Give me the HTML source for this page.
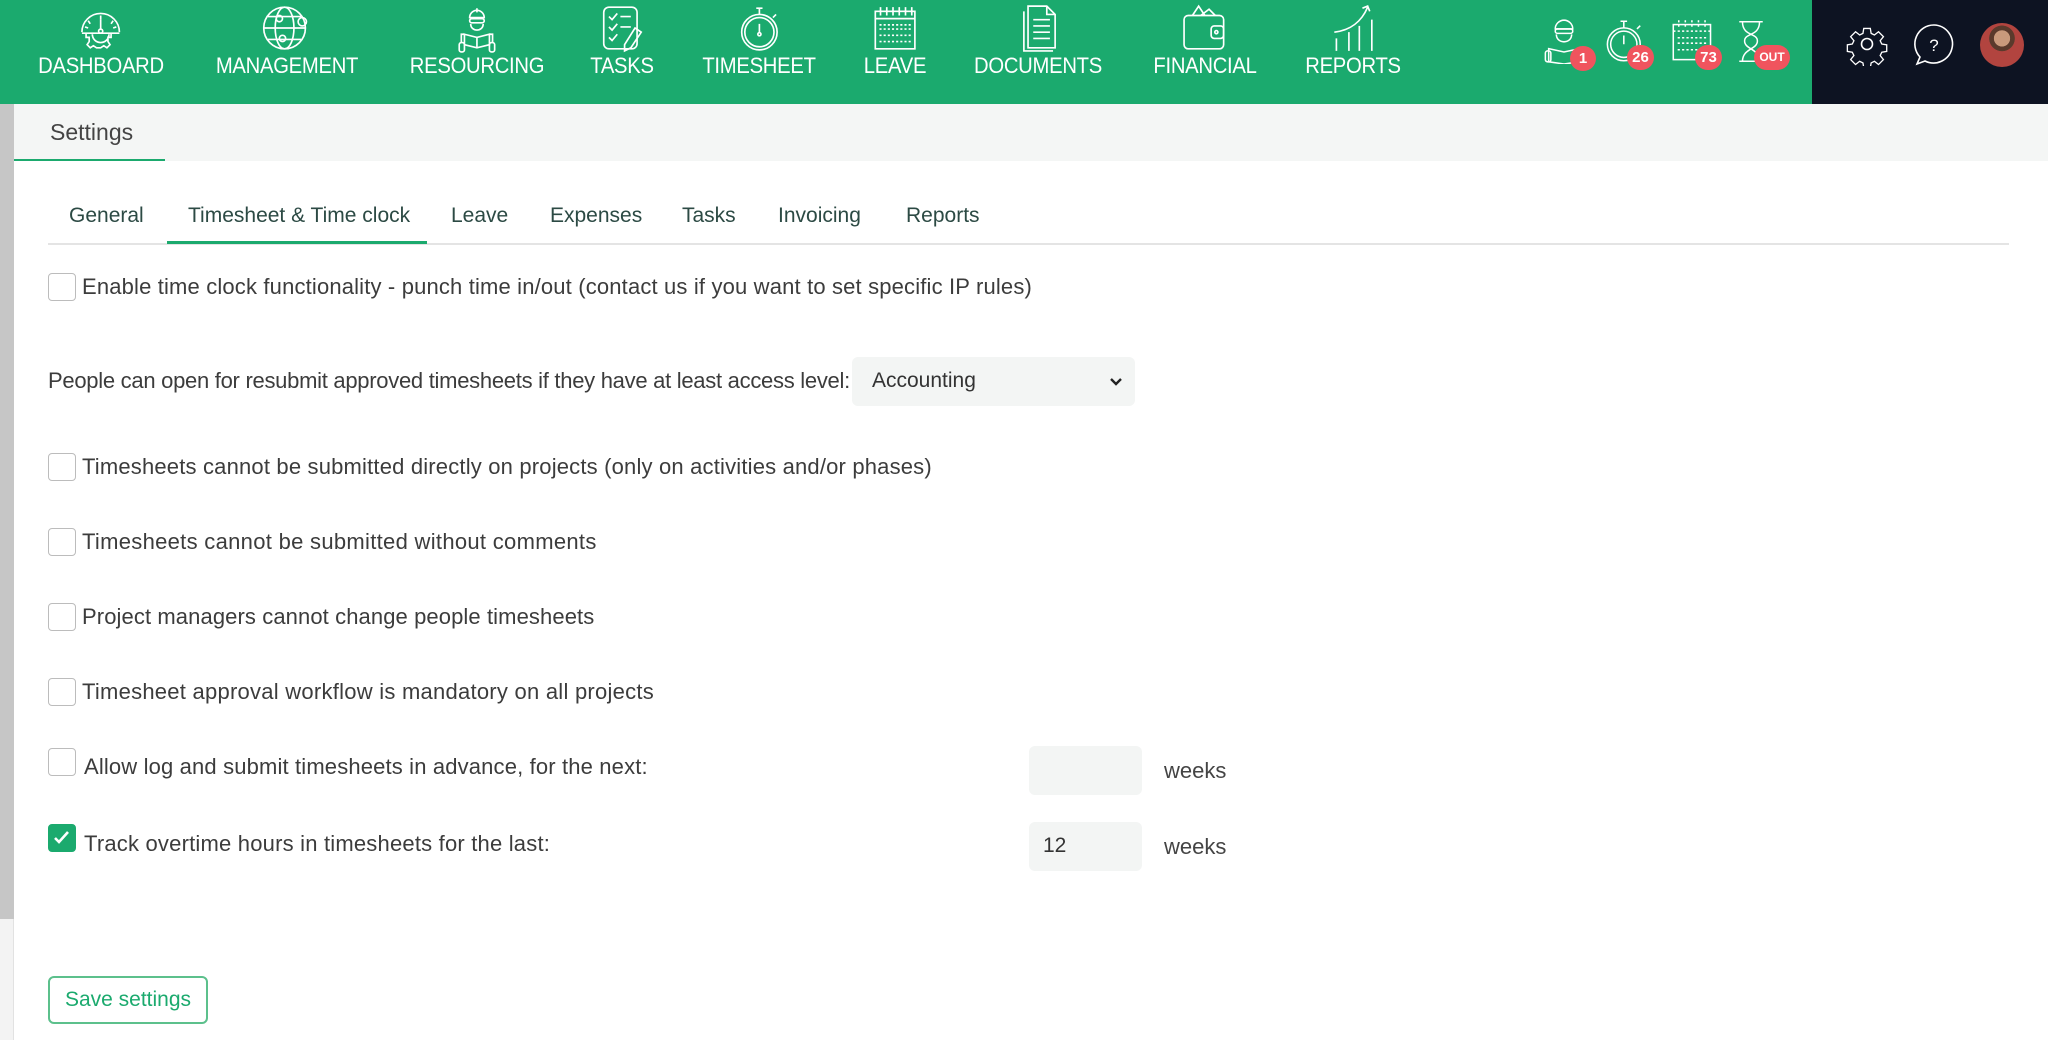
<!DOCTYPE html>
<html><head><meta charset="utf-8">
<style>
*{margin:0;padding:0;box-sizing:border-box}
body{width:2048px;height:1040px;overflow:hidden;background:#fff;font-family:"Liberation Sans",sans-serif;position:relative;color:#3a3a3a}
.nav{position:absolute;left:0;top:0;width:1812px;height:104px;background:#1baa6e}
.dark{position:absolute;left:1812px;top:0;width:236px;height:104px;background:#0d1322}
.item{position:absolute;top:0;height:104px;color:#fff;text-align:center;transform:translateX(-50%)}
.item svg{display:block;margin:3px auto 0;width:50px;height:50px}
.item span{display:block;font-size:22px;letter-spacing:-0.3px;margin-top:0px;transform:scaleX(0.92)}
.ic{position:absolute}
.badge{position:absolute;background:#f0545e;color:#fff;border-radius:13px;font-size:15px;font-weight:bold;text-align:center;height:25px;line-height:25px}
.strip{position:absolute;left:0;top:104px;width:14px;height:815px;background:#c6c6c6}
.strip2{position:absolute;left:0;top:919px;width:14px;height:121px;background:#f3f3f3;border-right:1px solid #e2e2e2}
.hdr{position:absolute;left:14px;top:104px;width:2034px;height:57px;background:#f4f6f5}
.hdr span{position:absolute;left:36px;top:15px;font-size:23px;color:#444}
.hdr i{position:absolute;left:0;top:55px;width:151px;height:2px;background:#1baa6e}
.tabs{position:absolute;left:48px;top:200px;width:1961px;height:45px;border-bottom:2px solid #e4e4e4}
.tab{position:absolute;top:4px;font-size:21px;color:#2c4a44}
.tabline{position:absolute;left:119px;top:41px;width:260px;height:3px;background:#1baa6e}
.row{position:absolute;left:48px;font-size:22px;color:#3c3c3c;white-space:nowrap}
.cb{position:absolute;left:48px;width:28px;height:28px;border:1.5px solid #bcbcbc;border-radius:4px;background:#fff}
.cb.on{background:#1baa6e;border-color:#1baa6e}
.sel{position:absolute;left:852px;top:357px;width:283px;height:49px;background:#f3f5f4;border-radius:6px;font-size:21px;padding:12px 0 0 20px;color:#333}
.inp{position:absolute;left:1029px;width:113px;height:49px;background:#f3f5f4;border-radius:6px;font-size:21px;padding:12px 0 0 14px;color:#333}
.wk{position:absolute;left:1164px;font-size:22px;color:#444}
.btn{position:absolute;left:48px;top:976px;width:160px;height:48px;border:2px solid #5cc08c;border-radius:6px;color:#1baa6e;font-size:21px;text-align:center;line-height:44px}
</style></head><body>
<div class="nav"></div><div class="dark"></div>

<div class="item" style="left:101px"><svg viewBox="0 0 48 48" fill="none" stroke="#fff" stroke-width="1.6"><path d="M6 28 A18 18 0 0 1 42 28"/><path d="M24 12v4M12 17l2 3M36 17l-2 3M9 23l3 1M39 23l-3 1"/><path d="M24 16v10"/><circle cx="24" cy="27" r="2"/><path d="M6 29h36M10 29v4h3v4l-2 3 3 3 3-2 3 2 4 0 3-2 3 2 3-3-2-3v-4h3v-4M16 30a8 8 0 0 0 16 0"/></svg><span>DASHBOARD</span></div>
<div class="item" style="left:287px"><svg viewBox="0 0 48 48" fill="none" stroke="#fff" stroke-width="1.6"><circle cx="22" cy="24" r="20"/><ellipse cx="22" cy="24" rx="9" ry="20"/><path d="M2 24h40M6 13h32M6 35h32"/><circle cx="17" cy="15" r="3"/><circle cx="20" cy="34" r="3"/><circle cx="39" cy="18" r="4"/></svg><span>MANAGEMENT</span></div>
<div class="item" style="left:477px"><svg viewBox="0 0 48 48" fill="none" stroke="#fff" stroke-width="1.6"><path d="M17 14a7 7 0 0 1 14 0zM24 5v4"/><rect x="17" y="15" width="14" height="4" rx="2"/><path d="M18 20c0 8 12 8 12 0"/><path d="M12 30l12 3 12-3v10l-12 3-12-3z M24 33v10"/><rect x="7" y="38" width="5" height="9" rx="2"/><rect x="36" y="38" width="5" height="9" rx="2"/><path d="M9 38v-8h3M39 38v-8h-3"/></svg><span>RESOURCING</span></div>
<div class="item" style="left:622px"><svg viewBox="0 0 48 48" fill="none" stroke="#fff" stroke-width="1.6"><rect x="6" y="4" width="32" height="40" rx="5"/><path d="M11 13l3 3 5-6M22 13h10M11 23l3 3 5-6M22 23h10M11 33l3 3 5-6"/><path d="M36 24l6 4-10 15-6 3 0-6z"/></svg><span>TASKS</span></div>
<div class="item" style="left:759px"><svg viewBox="0 0 48 48" fill="none" stroke="#fff" stroke-width="1.6"><circle cx="24" cy="28" r="17"/><circle cx="24" cy="28" r="14"/><path d="M24 5v6M21 5h6M24 20v9"/><circle cx="24" cy="30" r="1.5"/><path d="M37 14l3-3"/></svg><span>TIMESHEET</span></div>
<div class="item" style="left:895px"><svg viewBox="0 0 48 48" fill="none" stroke="#fff" stroke-width="1.6"><rect x="5" y="8" width="38" height="36"/><path d="M5 15h38M10 4v8M16 4v8M22 4v8M28 4v8M34 4v8M40 4v8"/><path d="M9 21h30M9 25h30M9 31h30M9 37h30" stroke-dasharray="2 2"/></svg><span>LEAVE</span></div>
<div class="item" style="left:1038px"><svg viewBox="0 0 48 48" fill="none" stroke="#fff" stroke-width="1.6"><path d="M10 8v38h28"/><path d="M14 3h18l8 8v32H14z"/><path d="M32 3v8h8M19 16h16M19 22h16M19 28h16M19 34h16"/></svg><span>DOCUMENTS</span></div>
<div class="item" style="left:1205px"><svg viewBox="0 0 48 48" fill="none" stroke="#fff" stroke-width="1.6"><rect x="4" y="12" width="38" height="32" rx="4"/><path d="M12 12l6-9 6 9M20 12l8-6 6 6"/><rect x="30" y="22" width="12" height="12" rx="3"/><circle cx="35" cy="28" r="1.5"/></svg><span>FINANCIAL</span></div>
<div class="item" style="left:1353px"><svg viewBox="0 0 48 48" fill="none" stroke="#fff" stroke-width="1.6"><path d="M8 46V34M20 46V28M30 46V22M42 46V16M6 28c16-2 26-10 32-24M33 5l5-2 2 5"/></svg><span>REPORTS</span></div>

<svg class="ic" style="left:1542px;top:18px" width="44" height="46" viewBox="0 0 40 42" fill="none" stroke="#fff" stroke-width="1.4"><path d="M12 10a8 8 0 0 1 16 0z"/><rect x="12" y="10" width="16" height="4" rx="2"/><path d="M13 15c0 9 14 9 14 0M6 28l14 3 14-3v12l-14 2-14-2z"/><rect x="3" y="30" width="5" height="10" rx="2"/></svg>
<div class="badge" style="left:1570px;top:46px;width:26px">1</div>
<svg class="ic" style="left:1604px;top:18px" width="44" height="46" viewBox="0 0 40 42" fill="none" stroke="#fff" stroke-width="1.4"><circle cx="18" cy="24" r="15"/><circle cx="18" cy="24" r="12"/><path d="M18 3v6M15 3h6M18 16v8M30 10l3-3"/></svg>
<div class="badge" style="left:1627px;top:45px;width:27px">26</div>
<svg class="ic" style="left:1671px;top:18px" width="44" height="46" viewBox="0 0 40 42" fill="none" stroke="#fff" stroke-width="1.4"><rect x="2" y="6" width="34" height="32"/><path d="M2 12h34M7 2v7M13 2v7M19 2v7M25 2v7M31 2v7M6 18h26M6 23h26M6 29h26" stroke-dasharray="2 2"/></svg>
<div class="badge" style="left:1695px;top:45px;width:27px">73</div>
<svg class="ic" style="left:1735px;top:18px" width="32" height="46" viewBox="0 0 30 42" fill="none" stroke="#fff" stroke-width="1.4"><path d="M4 3h22M4 40h22M7 3c0 14 14 10 14 18S7 28 7 40M23 3c0 14-14 10-14 18s14 7 14 19"/></svg>
<div class="badge" style="left:1754px;top:45px;width:36px;font-size:12px">OUT</div>

<svg class="ic" style="left:1845px;top:22px" width="44" height="44" viewBox="0 0 44 44" fill="none" stroke="#fff" stroke-width="1.6"><path d="M18 3h8l1 6 4 2 5-4 6 6-4 5 2 4 6 1v8l-6 1-2 4 4 5-6 6-5-4-4 2-1 6h-8l-1-6-4-2-5 4-6-6 4-5-2-4-6-1v-8l6-1 2-4-4-5 6-6 5 4 4-2z" transform="translate(4 4) scale(0.82)"/><circle cx="22" cy="22" r="5.5"/></svg>
<svg class="ic" style="left:1912px;top:22px" width="44" height="44" viewBox="0 0 44 44" fill="none" stroke="#fff" stroke-width="1.6"><path d="M22 3a19 19 0 1 1-9 36l-8 3 3-7A19 19 0 0 1 22 3z"/><text x="22" y="29" fill="#fff" stroke="none" font-size="17" text-anchor="middle" font-family="Liberation Sans">?</text></svg>
<div class="ic" style="left:1980px;top:23px;width:44px;height:44px;border-radius:50%;background:radial-gradient(circle at 50% 35%,#c99a7c 0 22%,#5a3a2c 23% 35%,#b2443f 36% 100%)"></div>

<div class="strip"></div><div class="strip2"></div>
<div class="hdr"><span>Settings</span><i></i></div>

<div class="tabs">
<div class="tab" style="left:21px">General</div>
<div class="tab" style="left:140px">Timesheet &amp; Time clock</div>
<div class="tab" style="left:403px">Leave</div>
<div class="tab" style="left:502px">Expenses</div>
<div class="tab" style="left:634px">Tasks</div>
<div class="tab" style="left:730px">Invoicing</div>
<div class="tab" style="left:858px">Reports</div>
<div class="tabline"></div>
</div>

<div class="cb" style="top:273px"></div><div class="row" style="left:82px;top:274px;letter-spacing:0.16px">Enable time clock functionality - punch time in/out (contact us if you want to set specific IP rules)</div>
<div class="row" style="top:368px;letter-spacing:-0.28px">People can open for resubmit approved timesheets if they have at least access level:</div>
<div class="sel">Accounting<svg style="position:absolute;right:12px;top:20px" width="14" height="10" viewBox="0 0 14 10"><path d="M2 2l5 5 5-5" fill="none" stroke="#222" stroke-width="2.4"/></svg></div>
<div class="cb" style="top:453px"></div><div class="row" style="left:82px;top:454px;letter-spacing:0.18px">Timesheets cannot be submitted directly on projects (only on activities and/or phases)</div>
<div class="cb" style="top:528px"></div><div class="row" style="left:82px;top:529px;letter-spacing:0.3px">Timesheets cannot be submitted without comments</div>
<div class="cb" style="top:603px"></div><div class="row" style="left:82px;top:604px;letter-spacing:0.1px">Project managers cannot change people timesheets</div>
<div class="cb" style="top:678px"></div><div class="row" style="left:82px;top:679px;letter-spacing:0.25px">Timesheet approval workflow is mandatory on all projects</div>
<div class="cb" style="top:748px"></div><div class="row" style="left:84px;top:754px;letter-spacing:0.15px">Allow log and submit timesheets in advance, for the next:</div>
<div class="inp" style="top:746px"></div><div class="wk" style="top:758px">weeks</div>
<div class="cb on" style="top:824px"><svg width="25" height="25" viewBox="0 0 25 25"><path d="M6 13l4 4 9-10" fill="none" stroke="#fff" stroke-width="2.6"/></svg></div><div class="row" style="left:84px;top:831px;letter-spacing:0.2px">Track overtime hours in timesheets for the last:</div>
<div class="inp" style="top:822px">12</div><div class="wk" style="top:834px">weeks</div>

<div class="btn">Save settings</div>
</body></html>
